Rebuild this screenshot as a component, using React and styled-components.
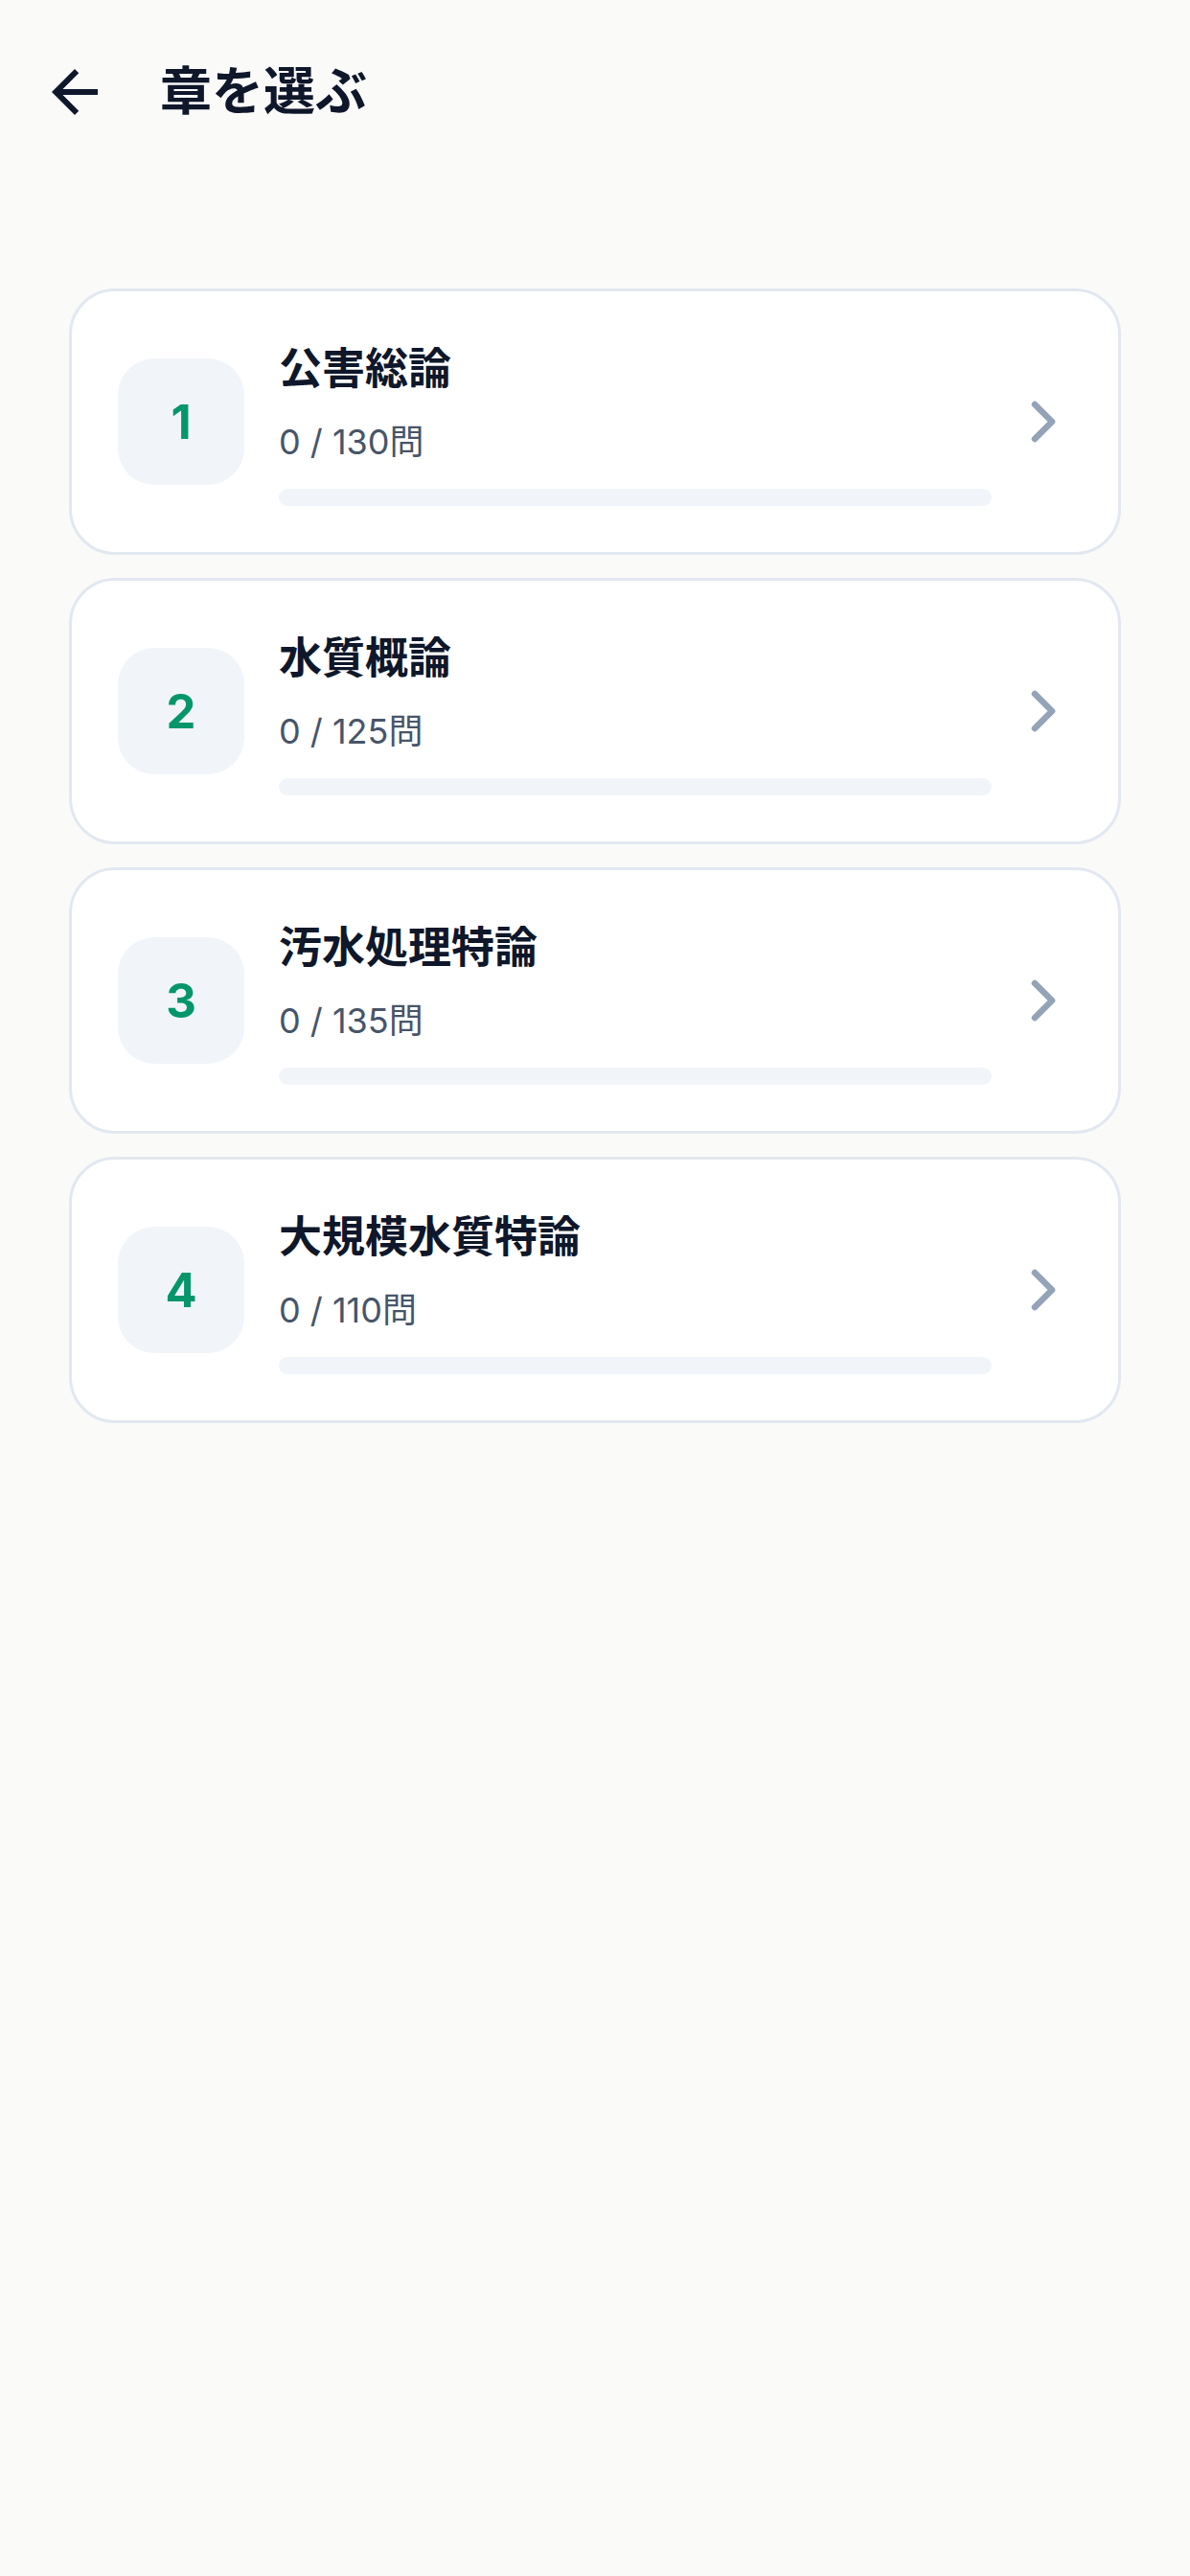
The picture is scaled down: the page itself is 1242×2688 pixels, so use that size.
import React from "react";
import styled, { createGlobalStyle } from "styled-components";
import { ChevronRight } from "lucide-react";

const GlobalStyle = createGlobalStyle`
  html, body {
    margin: 0;
    padding: 0;
    background: #fafaf9;
  }
  body {
    font-family: "Inter", "Noto Sans CJK JP", sans-serif;
    -webkit-font-smoothing: antialiased;
  }
  * {
    box-sizing: border-box;
  }
`;

const Page = styled.div`
  min-height: 2688px;
  background: #fafaf9;
`;

const Header = styled.header`
  display: flex;
  align-items: center;
  gap: 53px;
  height: 168px;
  padding: 24px 0 0 42px;
`;

const BackButton = styled.button`
  display: flex;
  align-items: center;
  justify-content: center;
  width: 72px;
  height: 72px;
  padding: 0;
  border: none;
  background: none;
  color: #0f172a;
  cursor: pointer;
`;

const Title = styled.h1`
  margin: 0;
  font-size: 54px;
  font-weight: 700;
  line-height: 72px;
  color: #0f172a;
`;

const ChapterList = styled.div`
  display: flex;
  flex-direction: column;
  gap: 24px;
  padding: 133px 72px 0;
`;

const Card = styled.div`
  display: flex;
  align-items: center;
  height: 278px;
  padding: 5px 42px 0 48px;
  background: #ffffff;
  border: 3px solid #e2e8f0;
  border-radius: 48px;
  cursor: pointer;
`;

const Badge = styled.div`
  display: flex;
  flex: 0 0 132px;
  align-items: center;
  justify-content: center;
  height: 132px;
  margin-top: -5px;
  border-radius: 38px;
  background: #f1f5f9;
  color: #059669;
  font-size: 49px;
  font-weight: 700;
`;

const Info = styled.div`
  display: flex;
  flex: 1;
  flex-direction: column;
  margin-left: 36px;
  margin-right: 18px;
`;

const ChapterName = styled.div`
  font-size: 45px;
  font-weight: 700;
  line-height: 56px;
  color: #0f172a;
`;

const Count = styled.div`
  margin-top: 24px;
  font-size: 36px;
  font-weight: 400;
  line-height: 48px;
  color: #475569;
`;

const Track = styled.div`
  height: 18px;
  margin-top: 25px;
  border-radius: 9px;
  background: #f1f5f9;
  overflow: hidden;
`;

const Fill = styled.div`
  height: 100%;
  border-radius: 9px;
  background: #059669;
`;

const Chevron = styled(ChevronRight)`
  flex: 0 0 72px;
  margin-top: -5px;
  color: #94a3b8;
`;

const chapters = [
  { no: 1, name: "公害総論", done: 0, total: 130 },
  { no: 2, name: "水質概論", done: 0, total: 125 },
  { no: 3, name: "汚水処理特論", done: 0, total: 135 },
  { no: 4, name: "大規模水質特論", done: 0, total: 110 },
];

const BackArrow = () => (
  <svg width="72" height="72" viewBox="0 0 24 24" fill="currentColor">
    <path d="M20 11H7.83l5.59-5.59L12 4l-8 8 8 8 1.41-1.41L7.83 13H20v-2z" />
  </svg>
);

const App = () => (
  <Page>
    <GlobalStyle />
    <Header>
      <BackButton aria-label="戻る">
        <BackArrow />
      </BackButton>
      <Title>章を選ぶ</Title>
    </Header>
    <ChapterList>
      {chapters.map((c) => (
        <Card key={c.no}>
          <Badge>{c.no}</Badge>
          <Info>
            <ChapterName>{c.name}</ChapterName>
            <Count>
              {c.done} / {c.total}問
            </Count>
            <Track>
              <Fill style={{ width: `${(c.done / c.total) * 100}%` }} />
            </Track>
          </Info>
          <Chevron size={72} strokeWidth={2.2} />
        </Card>
      ))}
    </ChapterList>
  </Page>
);

export default App;
